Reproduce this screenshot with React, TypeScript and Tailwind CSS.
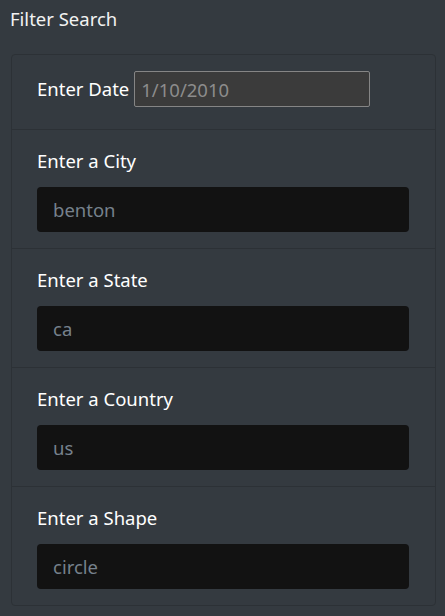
const font = { fontFamily: "'Noto Sans', 'Open Sans', sans-serif" };

const fields = [
    { label: 'Enter a City', value: 'benton' },
    { label: 'Enter a State', value: 'ca' },
    { label: 'Enter a Country', value: 'us' },
    { label: 'Enter a Shape', value: 'circle' },
];

export default function App() {
    return (
        <div className="min-h-screen bg-[#343a40] pb-[10px]" style={font}>
            {/* Title */}
            <h5 className="pl-[10px] pt-[4px] text-[18.5px] leading-[30px] text-[#f2f2f2]">Filter Search</h5>

            {/* Card */}
            <div className="mt-[20px] ml-[11px] mr-[9px] rounded-[4px] border border-[#2c3136]">
                <ul>
                    <li className="h-[75px] border-b border-[#2c3136] px-[25px] pt-[16px]">
                        <div className="flex h-[36px] items-center gap-[5px]">
                            <label className="text-[18.5px] leading-[30px] text-white">Enter Date</label>
                            <input
                                readOnly
                                value="1/10/2010"
                                className="h-[36px] w-[236px] rounded-[2px] border border-[#858585] bg-[#3b3b3b] px-[6px] text-[18.5px] text-[#8c8c8c] outline-none"
                                style={font}
                            />
                        </div>
                    </li>
                    {fields.map((f, i) => (
                        <li
                            key={f.label}
                            className={`px-[25px] pt-[16px] pb-[16px] ${i < fields.length - 1 ? 'border-b border-[#2c3136]' : ''}`}
                        >
                            <label className="block text-[18.5px] leading-[30px] text-white">{f.label}</label>
                            <input
                                readOnly
                                value={f.value}
                                className="mt-[11px] block h-[45px] w-[372px] rounded-[4px] bg-[#121212] px-[16px] text-[18.5px] text-[#76818c] outline-none"
                                style={font}
                            />
                        </li>
                    ))}
                </ul>
            </div>
        </div>
    );
}
